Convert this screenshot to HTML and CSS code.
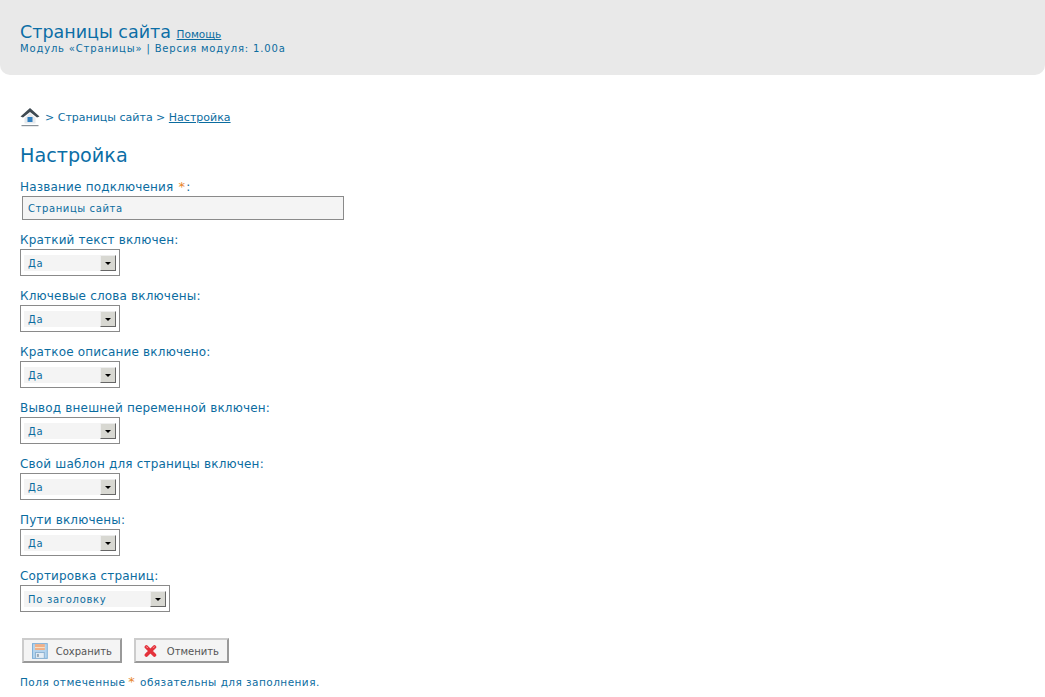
FILE: index.html
```html
<!DOCTYPE html>
<html lang="ru">
<head>
<meta charset="utf-8">
<title>Страницы сайта</title>
<link rel="stylesheet" href="styles.css">
</head>
<body>
<header class="pagehead">
  <h1 class="pagetitle">Страницы сайта <a class="help" href="#">Помощь</a></h1>
  <div class="modinfo">Модуль «Страницы» | Версия модуля: 1.00a</div>
</header>
<main class="content">
  <nav class="crumbs">
    <svg class="home" width="20" height="20" viewBox="0 0 20 20"><path d="M0.5 9.5 L10 1 L19.5 9.5 L17 10.5 L10 5 L3 10.5 Z" fill="#3f4a52"/><path d="M4.5 11 L10 6 L15.5 11 V16.5 H4.5 Z" fill="#e6eaee"/><rect x="7.5" y="10" width="5" height="5" fill="#2f7fc0"/><rect x="1.5" y="18" width="17" height="1.2" fill="#8a9299"/></svg>
    <span class="crumbtext">&gt; Страницы сайта &gt; <a href="#">Настройка</a></span>
  </nav>
  <h2 class="sectitle">Настройка</h2>
  <form class="form">
    <div class="field">
      <div class="label">Название подключения <span class="req star">*</span>:</div>
      <div class="textbox">Страницы сайта</div>
    </div>
    <div class="field"><div class="label">Краткий текст включен:</div><div class="select"><span class="val">Да</span><span class="arrow"></span></div></div>
    <div class="field"><div class="label">Ключевые слова включены:</div><div class="select"><span class="val">Да</span><span class="arrow"></span></div></div>
    <div class="field"><div class="label">Краткое описание включено:</div><div class="select"><span class="val">Да</span><span class="arrow"></span></div></div>
    <div class="field"><div class="label">Вывод внешней переменной включен:</div><div class="select"><span class="val">Да</span><span class="arrow"></span></div></div>
    <div class="field"><div class="label">Свой шаблон для страницы включен:</div><div class="select"><span class="val">Да</span><span class="arrow"></span></div></div>
    <div class="field"><div class="label">Пути включены:</div><div class="select"><span class="val">Да</span><span class="arrow"></span></div></div>
    <div class="field"><div class="label">Сортировка страниц:</div><div class="select wide"><span class="val">По заголовку</span><span class="arrow"></span></div></div>
    <div class="buttons">
      <div class="btn save">
        <svg width="16" height="16" viewBox="0 0 16 16"><rect x="0.5" y="0.5" width="15" height="15" fill="#b4d4ee" stroke="#7fb0d8"/><rect x="3" y="1" width="10" height="6" fill="#f0b088"/><rect x="3" y="4" width="10" height="1" fill="#f7e3c8"/><rect x="3.5" y="9.5" width="9" height="6" fill="#e4edf5" stroke="#8db2d2"/><rect x="5" y="11" width="2" height="3" fill="#9aa8b4"/></svg>
        <span class="btntext">Сохранить</span>
      </div>
      <div class="btn cancel">
        <svg width="16" height="16" viewBox="0 0 16 16"><path d="M3 3 L13 13 M13 3 L3 13" fill="none" stroke="#e4323b" stroke-width="4.6" stroke-linecap="round"/><path d="M2.5 2.5 L5 4 M13.5 2.5 L11 4" fill="none" stroke="#f6a0a4" stroke-width="1"/></svg>
        <span class="btntext">Отменить</span>
      </div>
    </div>
    <p class="note">Поля отмеченные <span class="req bigstar">*</span> обязательны для заполнения.</p>
  </form>
</main>
</body>
</html>
```
FILE: styles.css
```css
html, body { margin: 0; padding: 0; background: #fff; }
body { font-family: "DejaVu Sans", Verdana, sans-serif; font-size: 11px; color: #0b6c9f; overflow: hidden; }
a { color: #0b6c9f; }
.pagehead { background: #e9e9e9; height: 75px; box-sizing: border-box; padding: 22px 20px 0; border-radius: 0 0 10px 10px; }
.pagetitle { margin: 0; font-size: 17.5px; font-weight: normal; line-height: 21px; color: #0b6ea6; }
.help { font-size: 10.5px; }
.modinfo { font-size: 10px; line-height: 13px; letter-spacing: 0.83px; margin-top: -3px; }
.content { padding: 0 20px; }
.crumbs { display: flex; align-items: center; gap: 5px; height: 20px; margin-top: 32px; }
.crumbtext { font-size: 11px; }
.sectitle { margin: 17px 0 0; font-size: 19.2px; font-weight: normal; line-height: 24px; color: #0b6ea6; }
.field { margin-bottom: 13px; }
.field:first-child { margin-top: 12px; }
.label { font-size: 12px; line-height: 14px; margin-bottom: 2px; letter-spacing: 0.18px; }
.req { color: #e8862a; }
.star { margin: 0 1px 0 1px; font-size: 13px; line-height: 10px; }
.bigstar { font-size: 13px; line-height: 10px; margin: 0 1px 0 -1px; }
.textbox { height: 22px; width: 315px; margin-left: 2px; border: 1px solid #8a8a8a; background: #f4f4f4; font-size: 10px; line-height: 24px; padding-left: 5px; letter-spacing: 0.6px; }
.select { display: flex; align-items: center; justify-content: space-between; box-sizing: border-box; width: 100px; height: 27px; border: 1px solid #8a8a8a; padding: 4px 3px; background: #fff; font-size: 10px; letter-spacing: 0.7px; }
.select.wide { width: 150px; }
.val { flex: 1; background: #f4f4f4; height: 16px; line-height: 18px; padding-left: 4px; }
.arrow { position: relative; width: 16px; height: 16px; background: #d8d8d2; border: 1px solid; border-color: #eee #666 #666 #eee; box-sizing: border-box; }
.arrow::after { content: ""; position: absolute; left: 4px; top: 6px; border: 3px solid transparent; border-top: 3px solid #000; border-bottom: 0; }
.buttons { display: flex; gap: 12px; margin: 26px 0 0 2px; }
.btn { display: flex; align-items: center; gap: 8px; box-sizing: border-box; height: 25px; background: #f4f4f4; border: 2px solid; border-color: #ccc #999 #999 #ccc; padding: 0 8px; font-size: 10px; color: #555; }
.btntext { line-height: 14px; padding-top: 2px; }
.btn.save { width: 100px; }
.btn.cancel { width: 95px; gap: 10px; }
.note { margin: 12px 0 0; font-size: 10.5px; line-height: 14px; letter-spacing: 0.45px; }
```
